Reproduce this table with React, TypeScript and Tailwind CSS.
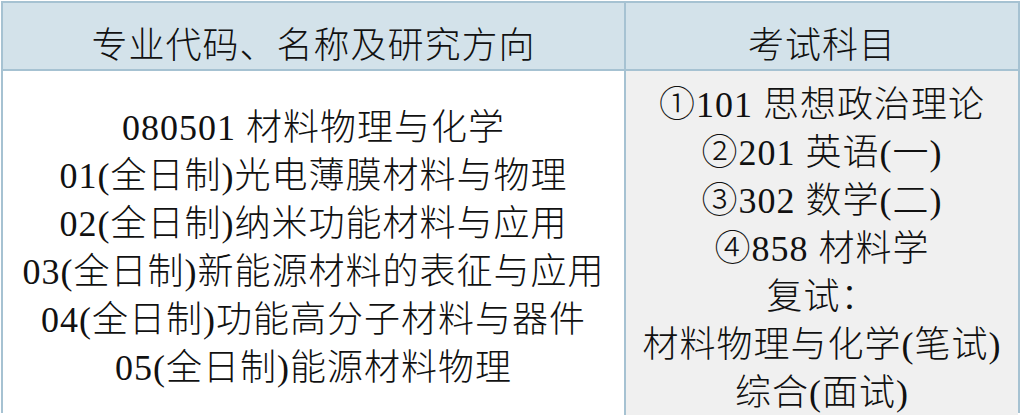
import React from "react";

export default function App() {
  const left = [
    "080501 材料物理与化学",
    "01(全日制)光电薄膜材料与物理",
    "02(全日制)纳米功能材料与应用",
    "03(全日制)新能源材料的表征与应用",
    "04(全日制)功能高分子材料与器件",
    "05(全日制)能源材料物理",
  ];
  const right = [
    "①101 思想政治理论",
    "②201 英语(一)",
    "③302 数学(二)",
    "④858 材料学",
    "复试：",
    "材料物理与化学(笔试)",
    "综合(面试)",
  ];
  return (
    <div className="w-[1024px] h-[415px] bg-white font-['Liberation_Serif','Noto_Sans_CJK_SC',serif]">
      <div className="ml-px mt-px w-[1019px] h-[412px] border-2 border-[#a6c2d2] grid grid-cols-[623px_1fr] grid-rows-[68px_1fr] text-[#111] text-[36px] font-light tracking-[1px]">
        <div className="bg-[#d3e2ea] border-r-2 border-b-2 border-[#a6c2d2] flex items-center justify-center pt-5 leading-none">
          专业代码、名称及研究方向
        </div>
        <div className="bg-[#d3e2ea] border-b-2 border-[#a6c2d2] flex items-center justify-center pt-5 leading-none">
          考试科目
        </div>
        <div className="bg-white border-r-2 border-[#a6c2d2] flex flex-col items-center justify-center leading-[48px] pt-2">
          {left.map((t) => (
            <div key={t} className="whitespace-nowrap">{t}</div>
          ))}
        </div>
        <div className="bg-[#f0f0f0] flex flex-col items-center justify-start leading-[48px] pt-[10px]">
          {right.map((t) => (
            <div key={t} className="whitespace-nowrap">{t}</div>
          ))}
        </div>
      </div>
    </div>
  );
}
